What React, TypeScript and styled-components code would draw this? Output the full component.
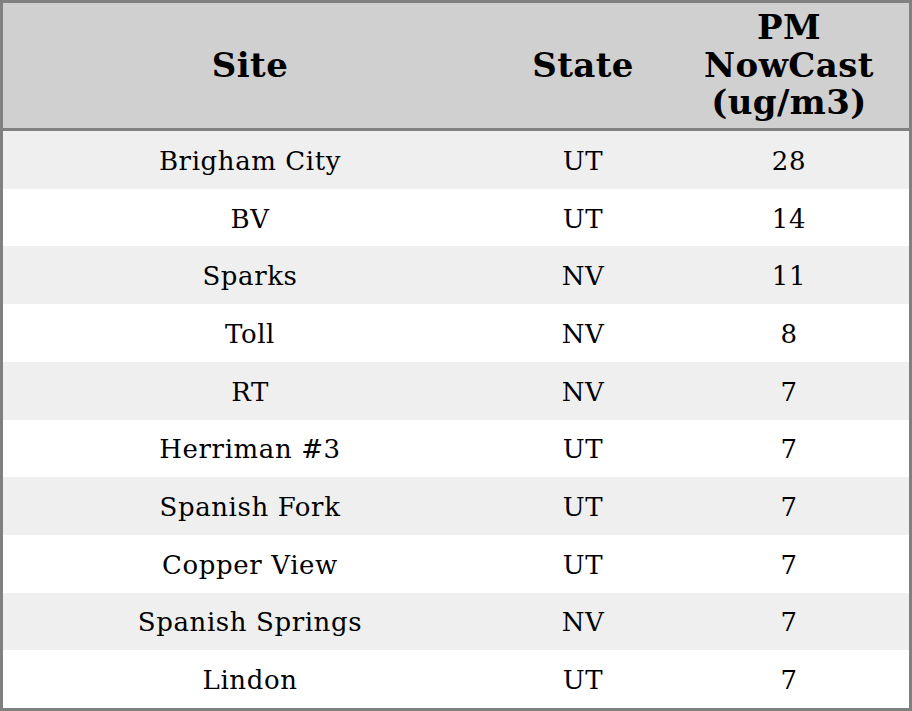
import styled, { createGlobalStyle } from "styled-components";

const GlobalStyle = createGlobalStyle`
  html, body {
    margin: 0;
    padding: 0;
    background: #fff;
  }
`;

const Table = styled.div`
  box-sizing: border-box;
  width: 912px;
  height: 711px;
  border: 3px solid #808080;
  display: flex;
  flex-direction: column;
  font-family: "DejaVu Serif", "Liberation Serif", serif;
  color: #000;
`;

const HeadRow = styled.div`
  display: grid;
  grid-template-columns: 494px 172px 240px;
  height: 125px;
  background: #d0d0d0;
  border-bottom: 3px solid #808080;
`;

const HeadCell = styled.div`
  display: flex;
  align-items: center;
  justify-content: center;
  text-align: center;
  font-weight: 700;
  font-size: 34px;
  letter-spacing: 0.4px;
  line-height: 37.5px;
`;

const Body = styled.div`
  flex: 1;
  display: flex;
  flex-direction: column;
`;

const Row = styled.div<{ $odd: boolean }>`
  flex: 1;
  display: grid;
  grid-template-columns: 494px 172px 240px;
  background: ${(p) => (p.$odd ? "#efefef" : "#ffffff")};
`;

const Cell = styled.div`
  display: flex;
  align-items: center;
  justify-content: center;
  padding-top: 2px;
  font-size: 26px;
  letter-spacing: 0.6px;
`;

const rows: [string, string, number][] = [
  ["Brigham City", "UT", 28],
  ["BV", "UT", 14],
  ["Sparks", "NV", 11],
  ["Toll", "NV", 8],
  ["RT", "NV", 7],
  ["Herriman #3", "UT", 7],
  ["Spanish Fork", "UT", 7],
  ["Copper View", "UT", 7],
  ["Spanish Springs", "NV", 7],
  ["Lindon", "UT", 7],
];

export default function App() {
  return (
    <>
      <GlobalStyle />
      <Table>
        <HeadRow>
          <HeadCell>Site</HeadCell>
          <HeadCell>State</HeadCell>
          <HeadCell>
            PM
            <br />
            NowCast
            <br />
            (ug/m3)
          </HeadCell>
        </HeadRow>
        <Body>
          {rows.map(([site, state, pm], i) => (
            <Row key={site} $odd={i % 2 === 0}>
              <Cell>{site}</Cell>
              <Cell>{state}</Cell>
              <Cell>{pm}</Cell>
            </Row>
          ))}
        </Body>
      </Table>
    </>
  );
}
